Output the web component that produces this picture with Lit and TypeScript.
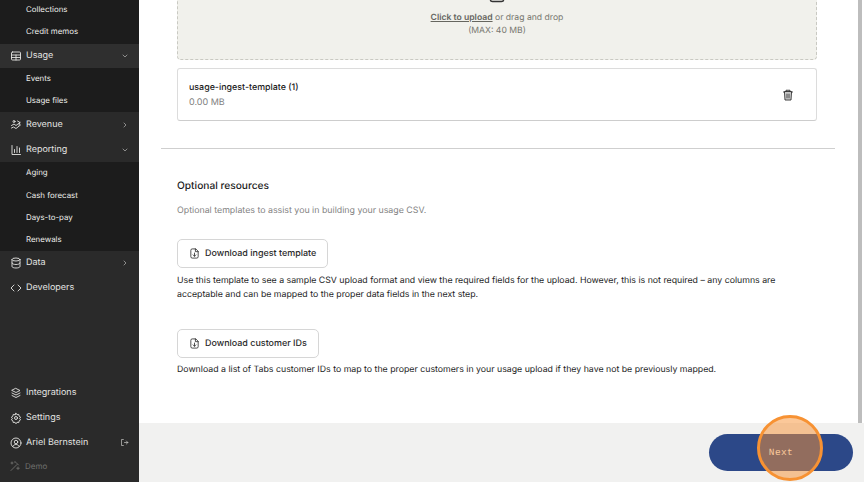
import { LitElement, html, css, svg } from "lit";
import { customElement } from "lit/decorators.js";

const ic = (p: unknown, s = 12) => html`<svg class="ic" width=${s} height=${s} viewBox="0 0 24 24" fill="none" stroke="currentColor" stroke-width="1.8" stroke-linecap="round" stroke-linejoin="round">${p}</svg>`;

const icons = {
  table: svg`<rect x="3" y="4" width="18" height="16" rx="2"/><path d="M3 10h18M3 15h18M12 10v10"/>`,
  revenue: svg`<circle cx="8" cy="5" r="2"/><path d="M3 13l5-3 4 3 8-6M3 18l4-2 5 3 9-7M15 4l5 3-2 5"/>`,
  chart: svg`<path d="M4 3v18h17M9 17v-6M14 17V5M19 17v-9"/>`,
  db: svg`<ellipse cx="12" cy="5" rx="8" ry="3"/><path d="M4 5v14c0 1.7 3.6 3 8 3s8-1.300 8-3V5M4 12c0 1.700 3.600 3 8 3s8-1.300 8-3"/>`,
  code: svg`<path d="M8 6l-6 6 6 6M16 6l6 6-6 6"/>`,
  layers: svg`<path d="M12 3l8 4-8 4-8-4zM4 12l8 4 8-4M4 17l8 4 8-4"/>`,
  gear: svg`<circle cx="12" cy="12" r="3"/><path d="M12 2.500l2 3 3.500-.7.700 3.500 3 2-2 2.700 2 2.700-3 2-.7 3.500-3.500-.7-2 3-2-3-3.500.7-.7-3.500-3-2 2-2.700-2-2.700 3-2 .7-3.500 3.500.7z"/>`,
  user: svg`<circle cx="12" cy="12" r="10"/><circle cx="12" cy="10" r="3.500"/><path d="M5.500 19c1.500-3 4-4 6.500-4s5 1 6.500 4"/>`,
  logout: svg`<path d="M9 4H4v16h5M12 12h9M17 8l4 4-4 4"/>`,
  wand: svg`<path d="M4 21L16 9M14 5l5 5M6 4v4M4 6h4M18 14v5M15.500 16.500h5M12 3v2"/>`,
  down: svg`<path d="M6 9l6 6 6-6"/>`,
  right: svg`<path d="M9 6l6 6-6 6"/>`,
  trash: svg`<path d="M3 6h18M8 6V2.500h8V6"/><path d="M5 6l1 16h12l1-16z" fill="#d8d8d8"/><path d="M10 10v8M14 10v8"/>`,
  file: svg`<path d="M14 2H7a3 3 0 0 0-3 3v14a3 3 0 0 0 3 3h10a3 3 0 0 0 3-3V8zM14 2v6h6M12 11v7M9 15l3 3 3-3"/>`,
  upload: svg`<rect x="3" y="2" width="18" height="20" rx="3"/>`,
};

@customElement("app-root")
export class AppRoot extends LitElement {
  static styles = css`
    :host { display: flex; width: 864px; height: 482px; overflow: hidden; font-family: Inter, "Liberation Sans", sans-serif; background: #fff; position: relative; text-rendering: geometricPrecision; }
    .ic { flex: none; display: block; }
    .side { width: 139px; flex: none; background: #2a2a2a; color: #e4e4e2; font-size: 9px; display: flex; flex-direction: column; height: 482px; }
    .sub { background: #1c1c1c; display: flex; flex-direction: column; }
    .sub div { height: 22.300px; box-sizing: border-box; display: flex; align-items: center; padding: 0 0 2px 26px; font-size: 7.900px; color: #ecece9; }
    .first div { padding-bottom: 0; }
    .first { margin-top: -2px; padding-bottom: 1px; }
    .last { margin-bottom: -1px; }
    .row { height: 25px; display: flex; align-items: center; padding: 0 10px 0 9.500px; gap: 4.500px; flex: none; font-size: 9px; }
    .row .lbl { flex: 1; }
    .row.open { height: 24px; background: #2f2f2f; }
    .spacer { flex: 1; }
    .bottom { padding-bottom: 5px; }
    .demo { color: #6f6f6d; height: 22px; padding-left: 9px; gap: 4px; font-size: 8px; }
    .chev { color: #cfcfcd; }
    .main { flex: 1; min-width: 0; display: flex; flex-direction: column; height: 482px; }
    .scroll { flex: 1; min-height: 0; overflow: hidden; position: relative; }
    .content { margin-top: -39px; padding-left: 22px; }
    .drop { height: 99px; width: 640px; box-sizing: border-box; margin-left: 16px; border: 1px dashed #c9c9c2; border-radius: 4px; background: #f1f1ec; display: flex; flex-direction: column; align-items: center; font-size: 8.650px; line-height: 13px; color: #77776f; padding-top: 23px; }
    .drop svg { color: #333; margin-bottom: 9px; }
    .drop b { font-weight: 600; text-decoration: underline; color: #66665f; }
    .filecard { margin: 8px 0 0 16px; height: 53px; width: 640px; box-sizing: border-box; border: 1px solid #dcdcdc; border-bottom-color: #cdcdcd; border-radius: 3px; padding: 0 22px 0 11px; display: flex; align-items: center; justify-content: space-between; }
    .fname { font-size: 8.880px; font-weight: 500; color: #1b1b1b; line-height: 15px; }
    .fsize { font-size: 9px; color: #808080; line-height: 15px; }
    .trash { color: #2b2b2b; }
    hr { border: 0; border-top: 1px solid #cfcfcf; margin: 27px 0 0 0; width: 674px; }
    .sec { margin-left: 16px; width: 640px; }
    h3 { font-size: 10.200px; font-weight: 500; color: #1b1b1b; margin: 31px 0 0; line-height: 13px; }
    .hint { font-size: 8.820px; color: #828282; margin: 11px 0 0; line-height: 13px; }
    .btn { display: inline-flex; align-items: center; gap: 5px; height: 29px; box-sizing: border-box; border: 1px solid #d6d6d6; border-radius: 5px; padding: 0 11px; font-size: 8.960px; font-weight: 500; color: #2a2a2a; background: #fff; }
    .b1 { margin-top: 22px; }
    .b2 { margin-top: 27px; }
    .desc { font-size: 8.780px; color: #1e1e1e; line-height: 14px; margin: 0; }
    .d1 { margin-top: 6px; }
    .d2 { margin-top: 5px; }
    .bar { position: absolute; right: 2px; top: 0; width: 4px; height: 100%; background: #bdbdbd; }
    .foot { height: 59px; flex: none; background: #f1f1f0; display: flex; align-items: center; justify-content: flex-end; padding: 0 11px 0 0; }
    .next { width: 144px; height: 37px; border-radius: 19px; background: #2c4888; color: #fff; display: flex; align-items: center; justify-content: center; font-family: "Liberation Mono", monospace; font-size: 9.500px; letter-spacing: .4px; }
    .spot { position: absolute; left: 757px; top: 415px; width: 66px; height: 66px; box-sizing: border-box; border: 3px solid #f79233; border-radius: 50%; background: rgba(247,146,51,.5); }
  `;

  render() {
    const row = (icon: unknown, label: string, chev?: "down" | "right", open = false) => html`
      <div class="row ${open ? "open" : ""}">${ic(icon)}<span class="lbl">${label}</span>${chev ? html`<span class="chev">${ic(icons[chev], 8)}</span>` : ""}</div>`;
    return html`
      <aside class="side">
        <div class="sub first"><div>Collections</div><div>Credit memos</div></div>
        ${row(icons.table, "Usage", "down", true)}
        <div class="sub"><div>Events</div><div>Usage files</div></div>
        ${row(icons.revenue, "Revenue", "right")}
        ${row(icons.chart, "Reporting", "down")}
        <div class="sub last"><div>Aging</div><div>Cash forecast</div><div>Days-to-pay</div><div>Renewals</div></div>
        ${row(icons.db, "Data", "right")}
        ${row(icons.code, "Developers")}
        <div class="spacer"></div>
        <div class="bottom">
          ${row(icons.layers, "Integrations")}
          ${row(icons.gear, "Settings")}
          <div class="row">${ic(icons.user)}<span class="lbl">Ariel Bernstein</span><span class="chev">${ic(icons.logout, 9)}</span></div>
          <div class="row demo">${ic(icons.wand)}<span>Demo</span></div>
        </div>
      </aside>
      <main class="main">
        <div class="scroll">
          <div class="content">
            <div class="drop">
              ${ic(icons.upload, 18)}
              <div><b>Click to upload</b> or drag and drop</div>
              <div>(MAX: 40 MB)</div>
            </div>
            <div class="filecard">
              <div><div class="fname">usage-ingest-template (1)</div><div class="fsize">0.00 MB</div></div>
              <span class="trash">${ic(icons.trash, 12)}</span>
            </div>
            <hr />
            <div class="sec">
              <h3>Optional resources</h3>
              <p class="hint">Optional templates to assist you in building your usage CSV.</p>
              <div class="btn b1">${ic(icons.file, 11)}Download ingest template</div>
              <p class="desc d1">Use this template to see a sample CSV upload format and view the required fields for the upload. However, this is not required – any columns are acceptable and can be mapped to the proper data fields in the next step.</p>
              <div class="btn b2">${ic(icons.file, 11)}Download customer IDs</div>
              <p class="desc d2">Download a list of Tabs customer IDs to map to the proper customers in your usage upload if they have not be previously mapped.</p>
            </div>
          </div>
          <div class="bar"></div>
        </div>
        <div class="foot"><div class="next">Next</div></div>
      </main>
      <div class="spot"></div>
    `;
  }
}
